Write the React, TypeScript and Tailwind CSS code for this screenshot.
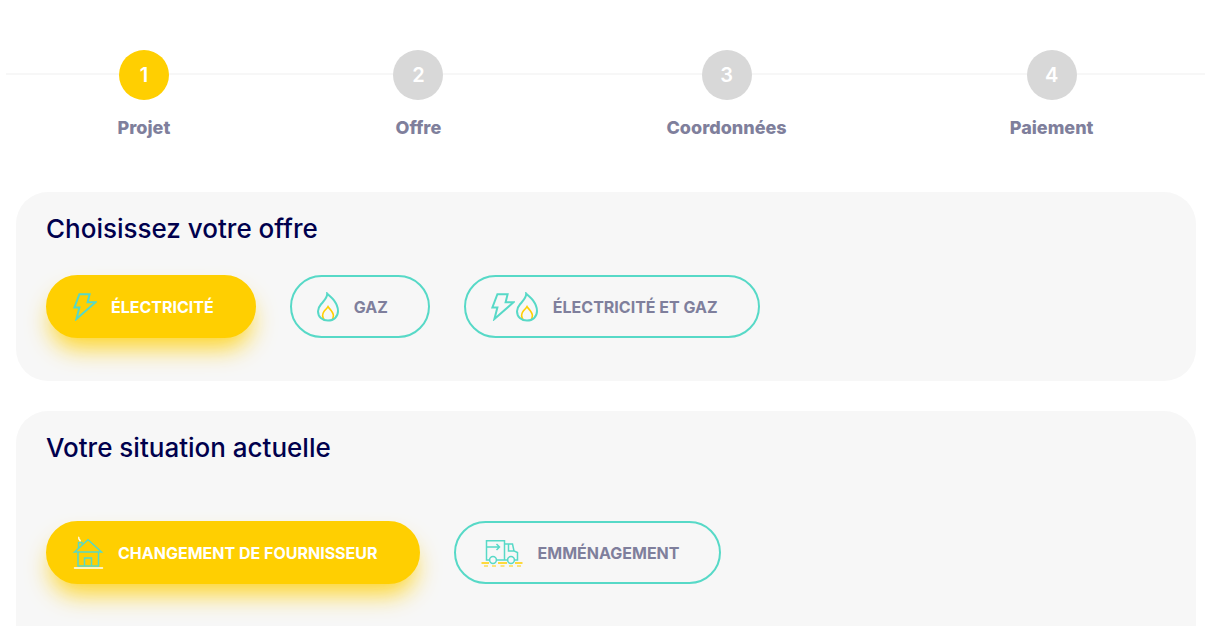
import { useState } from "react";
import type { ReactNode } from "react";

import clsx from "clsx";

const steps = ["Projet", "Offre", "Coordonnées", "Paiement"];

function BoltIcon() {
  return (
    <svg width="25" height="28" viewBox="0 0 25 28" fill="none" stroke="#57d9c7" strokeWidth="2" aria-hidden="true">
      <path d="M7.4 1.2H17.6L15.6 9.2H23.6L4.4 26L7.4 14.4H2.4Z" />
    </svg>
  );
}

function FlameIcon() {
  return (
    <svg width="24" height="30" viewBox="0 0 24 30" fill="none" strokeWidth="2" aria-hidden="true">
      <path
        d="M8.4 28C6.2 25.2 6.2 22 8 19.4C9.4 17.6 11 16.4 12 14.6C13 16.6 17.4 19.8 17.4 23.6C17.4 25.4 16.8 26.8 15.8 28"
        stroke="#ffcf01"
        strokeWidth="1.6"
      />
      <path
        d="M11.2 1.6C11.4 6 8.2 8.6 5.2 12C3 14.6 2 16.6 2 19.2C2 24.8 6.2 28.6 12 28.6C17.8 28.6 22 24.8 22 19C22 15.8 20.6 12 18 8.4C16.2 6 13.2 3.8 11.2 1.6Z"
        stroke="#57d9c7"
      />
    </svg>
  );
}

function HouseIcon() {
  return (
    <svg width="32" height="34" viewBox="0 0 32 34" fill="none" stroke="#57d9c7" strokeWidth="1.5" aria-hidden="true">
      <path d="M2.5 16L16 3.8L29.5 16Z" />
      <path d="M6 16V30H26.5V16M12.5 30V22H19.5V30M6.5 12V6.5H10V8.5" />
      <path d="M2.5 32H30.5" stroke="#fff" strokeLinecap="round" />
      <path d="M6.2 1.2C7.6 1.4 6.2 3.2 7.4 3.6C8.4 4 7.8 4.8 8.6 5.2" stroke="#fff" />
    </svg>
  );
}

function TruckIcon() {
  return (
    <svg width="44" height="28" viewBox="0 0 44 28" fill="none" stroke="#57d9c7" strokeWidth="1.5" aria-hidden="true">
      <path d="M9.5 21H6.5V1.8H24.5V21H17M24.5 5H32.5L34 12L37.5 13.5V21H34.5M27.5 21H24.5M28.5 5V12H34" />
      <path d="M7 8H19.5M16.5 5L19.5 8L16.5 11" />
      <circle cx="13" cy="21" r="3.4" />
      <circle cx="31" cy="21" r="3.4" />
      <path d="M1.5 24H9M18 24H27M35 24H42.5" stroke="#ffcf01" />
      <path d="M4 27H8M12 27H16M20.5 27H24.5M29 27H33M37 27H41" stroke="#ffcf01" strokeWidth="1" />
    </svg>
  );
}

const offers = [
  { label: "Électricité", icon: <BoltIcon /> },
  { label: "Gaz", icon: <FlameIcon /> },
  {
    label: "Électricité et gaz",
    icon: (
      <>
        <BoltIcon />
        <FlameIcon />
      </>
    ),
  },
];

const situations = [
  { label: "Changement de fournisseur", icon: <HouseIcon /> },
  { label: "Emménagement", icon: <TruckIcon /> },
];

function Stepper({ current }: { current: number }) {
  return (
    <nav aria-label="Étapes" className="relative mr-4 ml-1.5 pt-[50px]">
      <div className="absolute inset-x-0 top-[73px] h-[2px] bg-[#f7f7f7]" />
      <ol className="relative flex justify-around">
        {steps.map((step, idx) => (
          <li key={step} className="flex flex-col items-center">
            <span
              className={clsx(
                "flex size-[50px] items-center justify-center rounded-full text-xl font-semibold text-white",
                idx === current ? "bg-[#ffcf01]" : "bg-[#d8d8d8]"
              )}
            >
              {idx + 1}
            </span>
            <span className="mt-4 text-lg leading-6 font-extrabold text-[#7f7f9c]">{step}</span>
          </li>
        ))}
      </ol>
    </nav>
  );
}

type Option = { label: string; icon: ReactNode };

function Choices({ options }: { options: Option[] }) {
  const [selected, setSelected] = useState(0);

  return (
    <div className="flex flex-wrap gap-[34px]">
      {options.map((option, idx) => (
        <button
          key={option.label}
          type="button"
          aria-pressed={idx === selected}
          onClick={() => setSelected(idx)}
          className={clsx(
            "flex h-[63px] cursor-pointer items-center rounded-full border-2 pr-10 pl-6 text-base font-bold uppercase",
            idx === selected
              ? "border-[#ffcf01] bg-[#ffcf01] text-white shadow-[0_15px_25px_-5px_rgba(255,207,1,0.85)]"
              : "border-[#57d9c7] text-[#7f7f9c]"
          )}
        >
          <span className="flex items-center">{option.icon}</span>
          <span className="ml-[14px]">{option.label}</span>
        </button>
      ))}
    </div>
  );
}

export default function App() {
  return (
    <main className="min-h-screen bg-white font-['Inter',sans-serif]">
      <Stepper current={0} />
      <div className="mt-[52px] mr-[25px] ml-4 space-y-[30px]">
        <section className="rounded-[32px] bg-[#f7f7f7] px-[30px] pt-5 pb-[43px]">
          <h2 className="mb-[30px] text-[26px] leading-[33px] font-medium text-[#00004d]">Choisissez votre offre</h2>
          <Choices options={offers} />
        </section>
        <section className="rounded-[32px] bg-[#f7f7f7] px-[30px] pt-5 pb-20">
          <h2 className="mb-[57px] text-[26px] leading-[33px] font-medium text-[#00004d]">Votre situation actuelle</h2>
          <Choices options={situations} />
        </section>
      </div>
    </main>
  );
}
